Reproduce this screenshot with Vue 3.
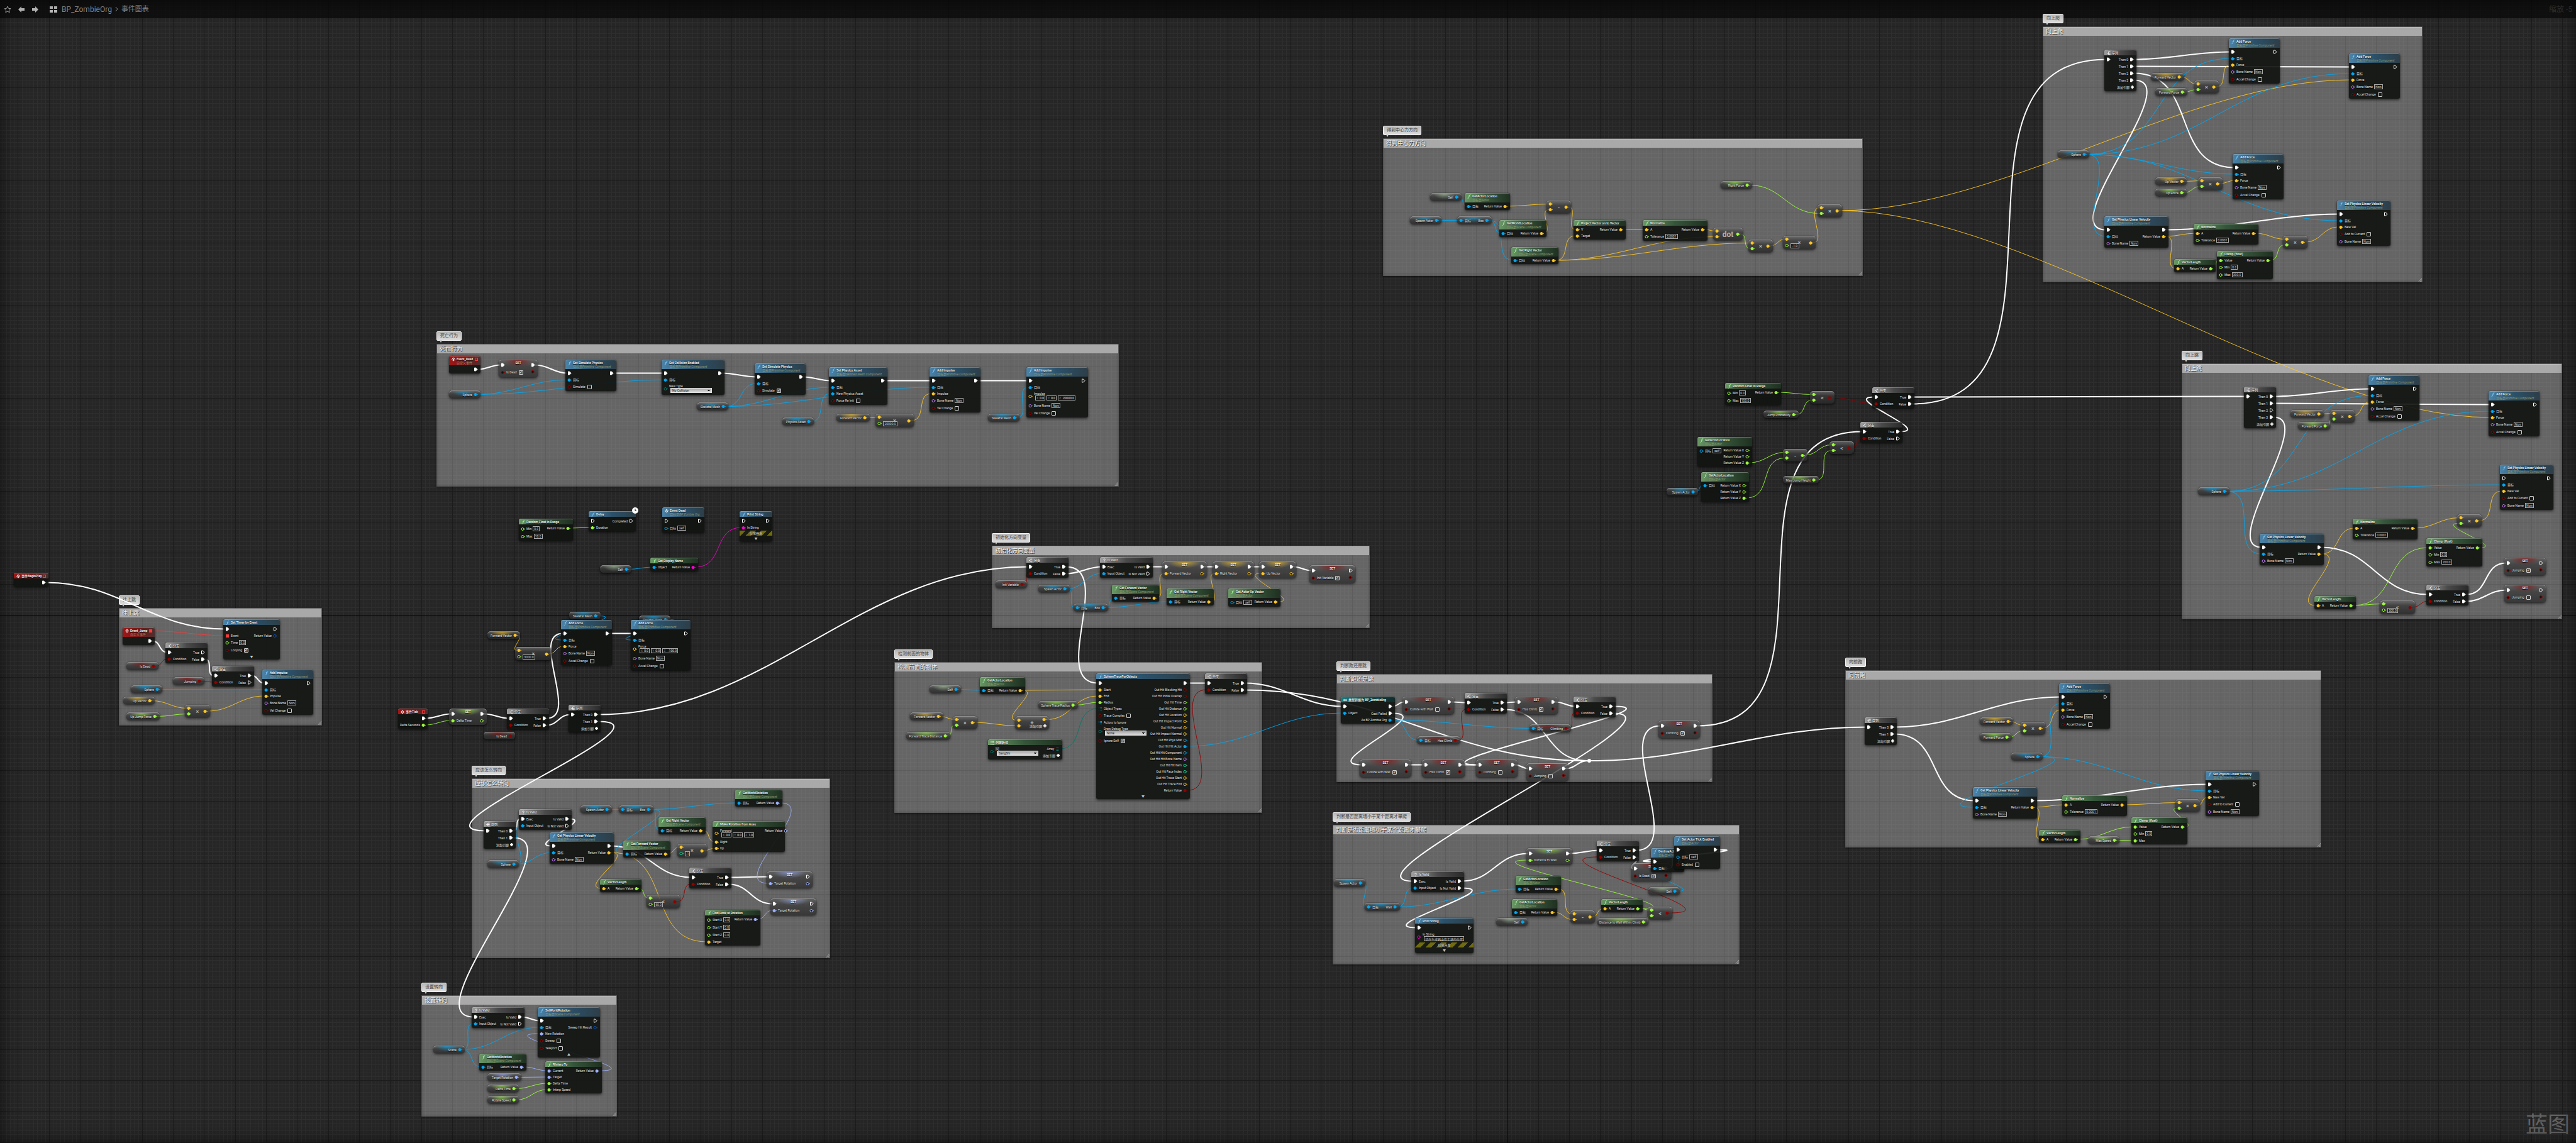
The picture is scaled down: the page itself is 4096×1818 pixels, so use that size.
<script setup>
import { computed, nextTick, onBeforeUnmount, onMounted, ref } from 'vue'

const ZOOM = 0.571
const MAJOR = 86.4
const ORIGIN = { x: 4197, y: 1713 }
const px = (v) => Math.round(v * ZOOM)

const colors = {
  exec: '#ffffff', obj: '#00a8f3', vec: '#ffc823', flt: '#9bff3c', bool: '#930000', name: '#b875e6',
  rot: '#9fb2ff', int: '#1fdf9f', str: '#ff00d4', struct: '#0b58c8', enum: '#067567', delegate: '#ff3838',
  objarr: '#00a8f3', enumarr: '#067567', self: '#a9c9a0',
}

/* pin = [kind, label, widget]; widgets: {t: text} {c: checked} {s: option} {v: [x, y, z]} */
const E = ['exec', '']
const target = ['obj', '目标']
const targetSelf = ['obj', '目标', { t: 'self' }]
const bone = ['name', 'Bone Name', { t: 'None' }]
const ret = (kind) => [kind, 'Return Value']
const off = { c: false }
const on = { c: true }

const node = (type, id, x, y, w, rest) => ({ type, id, x, y, w, ins: [], outs: [], ...rest })
const fn = (id, x, y, w, title, sub, ins, outs, extra = {}) =>
  node('box', id, x, y, w, { tone: 'blue', icon: 'f', title, sub, ins, outs, ...extra })
const pure = (id, x, y, w, title, sub, ins, outs, extra = {}) =>
  fn(id, x, y, w, title, sub, ins, outs, { tone: 'green', ...extra })
const event = (id, x, y, w, title, sub, outs = [E]) =>
  node('box', id, x, y, w, { tone: 'red', icon: 'diamond', title, sub, outs, delegate: true })
const branch = (id, x, y, w = 117) =>
  node('box', id, x, y, w, { tone: 'gray', icon: 'branch', title: '分支', ins: [E, ['bool', 'Condition']], outs: [['exec', 'True'], ['exec', 'False']] })
const seq = (id, x, y, n) =>
  node('box', id, x, y, 89, { tone: 'gray', icon: 'seq', title: '序列', ins: [E], outs: Array.from({ length: n }, (_, i) => ['exec', `Then ${i}`]), addPin: true })
const isValid = (id, x, y) =>
  node('box', id, x, y, 147, { tone: 'gray', icon: '?', title: 'Is Valid', ins: [['exec', 'Exec'], ['obj', 'Input Object']], outs: [['exec', 'Is Valid'], ['exec', 'Is Not Valid']] })
const get = (id, x, y, w, kind, label, ins = []) => node('pill', id, x, y, w, { glow: kind, ins, outs: [[kind, label]] })
const self = (id, x, y) => node('pill', id, x, y, 88, { glow: 'self', outs: [['obj', 'Self']] })
const set = (id, x, y, w, kind, label, widget) =>
  node('set', id, x, y, w, { glow: kind, title: 'SET', ins: [E, [kind, label, widget]], outs: [E, [kind, '']] })
const op = (id, x, y, w, glyph, a, b, out, widget, addPin = false) =>
  node('op', id, x, y, w, { glyph, ins: [[a, ''], [b, '', widget]], outs: [[out, '']], addPin })

const PRIM = '目标是Primitive Component'
const SCENE = '目标是Scene Component'
const ACTOR = '目标是Actor'
const addForce = (id, x, y, w = 141, v) =>
  fn(id, x, y, w, 'Add Force', PRIM, [E, target, ['vec', 'Force', v], bone, ['bool', 'Accel Change', off]], [E])
const addImpulse = (id, x, y, w = 142, v) =>
  fn(id, x, y, w, 'Add Impulse', PRIM, [E, target, ['vec', 'Impulse', v], bone, ['bool', 'Vel Change', off]], [E])
const getVelocity = (id, x, y) => fn(id, x, y, 178, 'Get Physics Linear Velocity', PRIM, [E, target, bone], [E, ret('vec')])
const setVelocity = (id, x, y) =>
  fn(id, x, y, 148, 'Set Physics Linear Velocity', PRIM, [E, target, ['vec', 'New Vel'], ['bool', 'Add to Current', off], bone], [E])
const normalize = (id, x, y) => pure(id, x, y, 181, 'Normalize', '', [['vec', 'A'], ['flt', 'Tolerance', { t: '0.0001' }]], [ret('vec')])
const vecLength = (id, x, y) => pure(id, x, y, 115, 'VectorLength', '', [['vec', 'A']], [ret('flt')])
const clamp = (id, x, y, max) =>
  pure(id, x, y, 155, 'Clamp (float)', '', [['flt', 'Value'], ['flt', 'Min', { t: '0.0' }], ['flt', 'Max', { t: max }]], [ret('flt')])
const randomRange = (id, x, y, w, max) =>
  pure(id, x, y, w, 'Random Float in Range', '', [['flt', 'Min', { t: '0.0' }], ['flt', 'Max', { t: max }]], [ret('flt')])
const xyz = [['flt', 'Return Value X'], ['flt', 'Return Value Y'], ['flt', 'Return Value Z']]

const comments = [
  { title: '往上跳', x: 331, y: 1693, w: 566, h: 328 },
  { title: '死亡行为', x: 1216, y: 958, w: 1901, h: 398 },
  { title: '应该怎么转向', x: 1314, y: 2168, w: 998, h: 501 },
  { title: '设置转向', x: 1173, y: 2773, w: 545, h: 338 },
  { title: '初始化方向变量', x: 2761, y: 1521, w: 1053, h: 230 },
  { title: '检测前面的物体', x: 2491, y: 1844, w: 1025, h: 421 },
  { title: '判断跑还是跳', x: 3722, y: 1877, w: 1047, h: 302 },
  { title: '判断是否距离墙小于某个距离才攀爬', x: 3711, y: 2297, w: 1133, h: 389 },
  { title: '得到中心力方向', x: 3852, y: 386, w: 1336, h: 384 },
  { title: '向上爬', x: 5688, y: 73, w: 1058, h: 712 },
  { title: '向上跳', x: 6076, y: 1013, w: 1059, h: 712 },
  { title: '向前跑', x: 5138, y: 1867, w: 1326, h: 494 },
]

const nodes = [
  /* hop timer */
  event('begin', 39, 1596, 97, '事件BeginPlay', ''),
  event('evJump', 342, 1747, 89, 'Event_Jump', '自定义事件'),
  fn('timer', 622, 1725, 158, 'Set Timer by Event', '', [E, ['delegate', 'Event'], ['flt', 'Time', { t: '0.5' }], ['bool', 'Looping', on]], [E, ret('struct')], { expand: '▼' }),
  branch('h1', 461, 1790),
  get('hDead', 352, 1844, 89, 'bool', 'Is Dead'),
  branch('h2', 590, 1855),
  get('hJumping', 482, 1887, 88, 'bool', 'Jumping'),
  get('hSphere', 364, 1909, 88, 'obj', 'Sphere'),
  addImpulse('hImp', 731, 1865),
  get('hUp', 343, 1941, 88, 'vec', 'Up Vector'),
  get('hForce', 352, 1984, 92, 'flt', 'Up Jump Force'),
  op('hMul', 515, 1963, 70, '×', 'vec', 'flt', 'vec'),

  /* death */
  event('evDead', 1250, 991, 87, 'Event_Dead', '自定义事件'),
  set('dSet', 1389, 1001, 109, 'bool', 'Is Dead', on),
  fn('dSim', 1574, 1001, 141, 'Set Simulate Physics', PRIM, [E, target, ['bool', 'Simulate', off]], [E]),
  fn('dCol', 1843, 1001, 176, 'Set Collision Enabled', PRIM, [E, target, ['enum', 'New Type', { s: 'No Collision' }]], [E]),
  fn('dSim2', 2102, 1012, 142, 'Set Simulate Physics', PRIM, [E, target, ['bool', 'Simulate', on]], [E]),
  get('dSphere', 1250, 1088, 87, 'obj', 'Sphere'),
  get('dMesh', 1940, 1120, 88, 'obj', 'Skeletal Mesh'),
  get('dAsset', 2179, 1163, 88, 'obj', 'Physics Asset'),
  fn('dPhys', 2308, 1023, 162, 'Set Physics Asset', '目标是Skinned Mesh Component', [E, target, ['obj', 'New Physics Asset'], ['bool', 'Force Re Init', off]], [E]),
  get('dFwd', 2329, 1153, 92, 'vec', 'Forward Vector'),
  op('dMul', 2438, 1153, 107, '×', 'vec', 'flt', 'vec', { t: '20000.0' }),
  addImpulse('dImp', 2589, 1023),
  get('dMesh2', 2751, 1153, 88, 'obj', 'Skeletal Mesh'),
  addImpulse('dImp2', 2859, 1023, 172, { v: ['0.0', '0.0', '20000.0'] }),

  /* tick */
  randomRange('rand', 1444, 1445, 150, '10.0'),
  fn('delay', 1639, 1424, 132, 'Delay', '', [E, ['flt', 'Duration']], [['exec', 'Completed']], { latent: true }),
  fn('callDead', 1844, 1413, 118, 'Event Dead', '目标是BP Zombie Org', [E, targetSelf], [E], { icon: 'diamond' }),
  fn('print', 2059, 1424, 91, 'Print String', '', [E, ['str', 'In String']], [E], { dev: true, expand: '▼' }),
  pure('display', 1811, 1553, 133, 'Get Display Name', '', [['obj', 'Object']], [ret('str')]),
  self('tSelf', 1671, 1575),
  get('tMesh', 1585, 1704, 87, 'obj', 'Skeletal Mesh'),
  get('tMesh2', 1779, 1714, 87, 'obj', 'Skeletal Mesh'),
  addForce('tAdd', 1562, 1726),
  addForce('tAdd2', 1756, 1726, 166, { v: ['0.0', '0.0', '-100.0'] }),
  get('tFwd', 1358, 1758, 91, 'vec', 'Forward Vector'),
  op('tMul', 1434, 1802, 101, '×', 'vec', 'flt', 'vec', { t: '3000.0' }),
  event('tick', 1109, 1974, 82, '事件Tick', '', [E, ['flt', 'Delta Seconds']]),
  set('tDelta', 1250, 1974, 105, 'flt', 'Delta Time'),
  branch('tBr', 1411, 1974),
  seq('tSeq', 1584, 1964, 2),
  get('tDead', 1346, 2039, 88, 'bool', 'Is Dead'),

  /* how to turn */
  seq('rSeq', 1346, 2287, 2),
  isValid('rValid', 1444, 2254),
  get('rSphere', 1357, 2395, 88, 'obj', 'Sphere'),
  getVelocity('rVel', 1531, 2319),
  get('rSpawn', 1617, 2244, 87, 'obj', 'Spawn Actor'),
  get('rBox', 1724, 2244, 97, 'obj', 'Box', [target]),
  pure('rRot', 2048, 2200, 131, 'GetWorldRotation', SCENE, [target], [ret('rot')]),
  pure('rRight', 1833, 2276, 131, 'Get Right Vector', SCENE, [target], [ret('vec')]),
  pure('rFwd', 1736, 2341, 131, 'Get Forward Vector', SCENE, [target], [ret('vec')]),
  op('rMul', 1887, 2351, 83, '×', 'vec', 'int', 'vec', { t: '-1' }),
  pure('rAxes', 1984, 2287, 202, 'Make Rotation from Axes', '', [['vec', 'Forward', { v: ['0.0', '0.0', '1.0'] }], ['vec', 'Right'], ['vec', 'Up']], [ret('rot')]),
  vecLength('rLen', 1670, 2449),
  op('rLess', 1801, 2492, 93, '<', 'flt', 'flt', 'bool', { t: '50.0' }),
  branch('rBr', 1919, 2416),
  set('rSet', 2134, 2427, 128, 'rot', 'Target Rotation'),
  set('rSet2', 2145, 2503, 128, 'rot', 'Target Rotation'),
  pure('rLook', 1963, 2535, 154, 'Find Look at Rotation', '', [['flt', 'Start X', { t: '0.0' }], ['flt', 'Start Y', { t: '0.0' }], ['flt', 'Start Z', { t: '0.0' }], ['vec', 'Target']], [ret('rot')]),

  /* apply rotation */
  isValid('aValid', 1314, 2805),
  fn('aSet', 1497, 2805, 173, 'SetWorldRotation', SCENE, [E, target, ['rot', 'New Rotation'], ['bool', 'Sweep', off], ['bool', 'Teleport', off]], [E, ['struct', 'Sweep Hit Result']], { expand: '▲' }),
  get('aScene', 1206, 2913, 88, 'obj', 'Scene'),
  pure('aGet', 1335, 2935, 132, 'GetWorldRotation', SCENE, [target], [ret('rot')]),
  get('aTarget', 1357, 2989, 95, 'rot', 'Target Rotation'),
  get('aDelta', 1357, 3021, 88, 'flt', 'Delta Time'),
  get('aSpeed', 1357, 3053, 88, 'flt', 'Rotate Speed'),
  pure('aInterp', 1519, 2956, 157, 'RInterp To', '', [['rot', 'Current'], ['rot', 'Target'], ['flt', 'Delta Time'], ['flt', 'Interp Speed']], [ret('rot')]),

  /* direction variables */
  branch('iBr', 2858, 1552),
  get('iVar', 2773, 1617, 87, 'bool', 'Init Variable'),
  isValid('iValid', 3063, 1552),
  get('iSpawn', 2891, 1628, 87, 'obj', 'Spawn Actor'),
  get('iBox', 2989, 1682, 97, 'obj', 'Box', [target]),
  pure('iFwd', 3096, 1628, 131, 'Get Forward Vector', SCENE, [target], [ret('vec')]),
  pure('iRight', 3248, 1639, 131, 'Get Right Vector', SCENE, [target], [ret('vec')]),
  pure('iUp', 3420, 1639, 146, 'Get Actor Up Vector', ACTOR, [targetSelf], [ret('vec')]),
  set('iSetF', 3237, 1564, 124, 'vec', 'Forward Vector'),
  set('iSetR', 3376, 1564, 115, 'vec', 'Right Vector'),
  set('iSetU', 3507, 1564, 103, 'vec', 'Up Vector'),
  set('iSetV', 3647, 1574, 127, 'bool', 'Init Variable', on),

  /* forward trace */
  self('sSelf', 2589, 1909),
  pure('sLoc', 2729, 1887, 126, 'GetActorLocation', ACTOR, [target], [ret('vec')]),
  get('sFwd', 2534, 1984, 92, 'vec', 'Forward Vector'),
  get('sDist', 2524, 2039, 122, 'flt', 'Forward Trace Distance'),
  op('sMul', 2653, 1995, 68, '×', 'vec', 'flt', 'vec'),
  op('sAdd', 2826, 1995, 94, '+', 'vec', 'vec', 'vec', undefined, true),
  get('sRadius', 2891, 1952, 110, 'flt', 'Sphere Trace Radius'),
  pure('sArray', 2751, 2060, 206, '创建数组', '', [['enum', '[0]', { s: 'SangShi' }]], [['enumarr', 'Array']], { icon: 'array', addPin: true }),
  fn('trace', 3053, 1876, 261, 'SphereTraceForObjects', '', [
    E, ['vec', 'Start'], ['vec', 'End'], ['flt', 'Radius'], ['enumarr', 'Object Types'], ['bool', 'Trace Complex', off],
    ['objarr', 'Actors to Ignore'], ['enum', 'Draw Debug Type', { s: 'None' }], ['bool', 'Ignore Self', on],
  ], [
    E, ['bool', 'Out Hit Blocking Hit'], ['bool', 'Out Hit Initial Overlap'], ['flt', 'Out Hit Time'], ['flt', 'Out Hit Distance'],
    ['vec', 'Out Hit Location'], ['vec', 'Out Hit Impact Point'], ['vec', 'Out Hit Normal'], ['vec', 'Out Hit Impact Normal'],
    ['obj', 'Out Hit Phys Mat'], ['obj', 'Out Hit Hit Actor'], ['obj', 'Out Hit Hit Component'], ['name', 'Out Hit Hit Bone Name'],
    ['int', 'Out Hit Hit Item'], ['int', 'Out Hit Face Index'], ['vec', 'Out Hit Trace Start'], ['vec', 'Out Hit Trace End'], ret('bool'),
  ], { expand: '▼' }),
  branch('sBr', 3355, 1876),

  /* run or jump */
  fn('cast', 3733, 1941, 151, '类型转换为 BP_ZombieOrg', '', [E, ['obj', 'Object']], [E, ['exec', 'Cast Failed'], ['obj', 'As BP Zombie Org']], { tone: 'teal', icon: 'cast' }),
  set('jWall', 3906, 1941, 143, 'bool', 'Collide with Wall', off),
  branch('jBr', 4078, 1930),
  set('jHas', 4219, 1941, 119, 'bool', 'Has Climb', on),
  branch('jBr2', 4381, 1941),
  get('jClimbing', 4260, 2018, 116, 'bool', 'Climbing', [target]),
  get('jHasGet', 3945, 2050, 120, 'bool', 'Has Climb', [target]),
  set('jWall2', 3787, 2115, 143, 'bool', 'Collide with Wall', on),
  set('jHas2', 3960, 2115, 119, 'bool', 'Has Climb', on),
  set('jClimb2', 4111, 2115, 116, 'bool', 'Climbing', off),
  set('jJump', 4251, 2126, 117, 'bool', 'Jumping', off),
  node('knot', 'knot', 4421, 2114, 10, { ins: [E], outs: [E] }),
  set('jClimb3', 4618, 2007, 115, 'bool', 'Climbing', on),

  /* wall distance */
  get('wSpawn', 3714, 2449, 88, 'obj', 'Spawn Actor'),
  get('wWall', 3801, 2515, 98, 'obj', 'Wall', [target]),
  isValid('wValid', 3930, 2428),
  fn('wPrint', 3941, 2557, 162, 'Print String', '', [E, ['str', 'In String', { t: '请在生成器中指定墙的位置', below: true }]], [E], { dev: true, expand: '▼' }),
  set('wDist', 4251, 2363, 127, 'flt', 'Distance to Wall'),
  pure('wLoc', 4221, 2439, 126, 'GetActorLocation', ACTOR, [target], [ret('vec')]),
  pure('wLoc2', 4211, 2504, 126, 'GetActorLocation', ACTOR, [target], [ret('vec')]),
  self('wSelf', 4167, 2557),
  op('wSub', 4373, 2536, 69, '-', 'vec', 'vec', 'vec'),
  vecLength('wLen', 4459, 2504),
  get('wWithin', 4449, 2557, 142, 'flt', 'Distance to Wall Within Climb'),
  op('wLess', 4589, 2525, 69, '<', 'flt', 'flt', 'bool'),
  branch('wBr', 4446, 2341),
  set('wDead', 4543, 2405, 110, 'bool', 'Is Dead', on),
  fn('wDestroy', 4597, 2363, 93, 'DestroyActor', ACTOR, [E, target], [E]),
  fn('wTick', 4662, 2330, 128, 'Set Actor Tick Enabled', ACTOR, [E, targetSelf, ['bool', 'Enabled', off]], [E]),
  self('wSelf2', 4590, 2471),

  /* centering force */
  self('cSelf', 3982, 537),
  pure('cLoc', 4078, 537, 126, 'GetActorLocation', ACTOR, [target], [ret('vec')]),
  get('cSpawn', 3927, 602, 88, 'obj', 'Spawn Actor'),
  get('cBox', 4058, 602, 97, 'obj', 'Box', [target]),
  pure('cWorld', 4176, 613, 132, 'GetWorldLocation', SCENE, [target], [ret('vec')]),
  pure('cRight', 4208, 688, 132, 'Get Right Vector', SCENE, [target], [ret('vec')]),
  op('cSub', 4306, 559, 69, '-', 'vec', 'vec', 'vec'),
  pure('cProj', 4381, 613, 146, 'Project Vector on to Vector', '', [['vec', 'V'], ['vec', 'Target']], [ret('vec')]),
  normalize('cNorm', 4575, 613),
  op('cDot', 4770, 634, 82, 'dot', 'vec', 'vec', 'flt'),
  op('cMul', 4868, 667, 69, '×', 'vec', 'flt', 'vec'),
  op('cNeg', 4965, 656, 91, '×', 'vec', 'flt', 'vec', { t: '-1.0' }),
  op('cOut', 5061, 569, 69, '×', 'vec', 'flt', 'vec'),
  get('cForce', 4791, 505, 88, 'flt', 'Right Force'),

  /* jump chance */
  randomRange('pRand', 4803, 1067, 155, '100.0'),
  op('pLess', 5040, 1089, 68, '<', 'flt', 'flt', 'bool'),
  get('pProb', 4911, 1143, 98, 'flt', 'Jump Probability'),
  branch('pBr', 5213, 1078),
  branch('pBr2', 5181, 1175),
  pure('pLoc', 4727, 1218, 153, 'GetActorLocation', ACTOR, [targetSelf], xyz),
  pure('pLoc2', 4738, 1316, 133, 'GetActorLocation', ACTOR, [target], xyz),
  get('pSpawn', 4641, 1359, 87, 'obj', 'Spawn Actor'),
  op('pSub', 4965, 1251, 68, '-', 'flt', 'flt', 'flt'),
  op('pLess2', 5095, 1229, 69, '<', 'flt', 'flt', 'bool'),
  get('pMax', 4965, 1326, 100, 'flt', 'Max Jump Height'),

  /* climb */
  seq('uSeq', 5860, 138, 4),
  addForce('uAdd', 6206, 106),
  addForce('uAdd2', 6541, 148),
  get('uFwd', 5990, 203, 92, 'vec', 'Forward Vector'),
  get('uForce', 6001, 246, 90, 'flt', 'Forward Force'),
  op('uMul', 6110, 224, 68, '×', 'vec', 'flt', 'vec'),
  get('uSphere', 5731, 419, 88, 'obj', 'Sphere'),
  addForce('uAdd3', 6217, 429),
  get('uUp', 6001, 494, 88, 'vec', 'Up Vector'),
  get('uUpF', 6001, 526, 88, 'flt', 'Up Force'),
  op('uMul2', 6120, 494, 69, '×', 'vec', 'flt', 'vec'),
  getVelocity('uVel', 5860, 602),
  normalize('uNorm', 6109, 623),
  vecLength('uLen', 6055, 722),
  clamp('uClamp', 6174, 699, '300.0'),
  op('uMul3', 6358, 657, 69, '×', 'vec', 'flt', 'vec'),
  setVelocity('uSetV', 6508, 559),

  /* jump */
  seq('vSeq', 6249, 1077, 4),
  addForce('vAdd', 6595, 1046),
  addForce('vAdd2', 6930, 1089),
  get('vFwd', 6379, 1142, 92, 'vec', 'Forward Vector'),
  get('vForce', 6400, 1175, 90, 'flt', 'Forward Force'),
  op('vMul', 6488, 1142, 69, '×', 'vec', 'flt', 'vec'),
  get('vSphere', 6120, 1358, 88, 'obj', 'Sphere'),
  setVelocity('vSetV', 6962, 1294),
  getVelocity('vVel', 6292, 1487),
  normalize('vNorm', 6552, 1445),
  vecLength('vLen', 6444, 1660),
  clamp('vClamp', 6757, 1499, '200.0'),
  op('vMul2', 6843, 1433, 69, '×', 'vec', 'flt', 'vec'),
  branch('vBr', 6757, 1629),
  op('vLess', 6627, 1672, 98, '<', 'flt', 'flt', 'bool', { t: '500.0' }),
  set('vSet', 6973, 1553, 116, 'bool', 'Jumping', on),
  set('vSet2', 6973, 1629, 116, 'bool', 'Jumping', off),

  /* run */
  seq('fSeq', 5192, 1998, 2),
  addForce('fAdd', 5734, 1904),
  get('fFwd', 5513, 1999, 92, 'vec', 'Forward Vector'),
  get('fForce', 5513, 2042, 90, 'flt', 'Forward Force'),
  op('fMul', 5627, 2010, 68, '×', 'vec', 'flt', 'vec'),
  get('fSphere', 5600, 2096, 88, 'obj', 'Sphere'),
  getVelocity('fVel', 5494, 2193),
  normalize('fNorm', 5742, 2215),
  vecLength('fLen', 5677, 2311),
  clamp('fClamp', 5936, 2276, '300.0'),
  op('fMul2', 6058, 2226, 69, '×', 'vec', 'flt', 'vec'),
  get('fMax', 5815, 2330, 88, 'flt', 'Max Speed'),
  setVelocity('fSetV', 6141, 2147),
]

const wires = `
begin.0>timer.0 evJump.d>timer.1 evJump.0>h1.0 hDead.0>h1.1 h1.1>h2.0 hJumping.0>h2.1 h2.0>hImp.0 hSphere.0>hImp.1 hUp.0>hMul.0 hForce.0>hMul.1 hMul.0>hImp.2
evDead.0>dSet.0 dSet.0>dSim.0 dSim.0>dCol.0 dCol.0>dSim2.0 dSim2.0>dPhys.0 dPhys.0>dImp.0 dImp.0>dImp2.0 dSphere.0>dSim.1 dSphere.0>dCol.1
dMesh.0>dSim2.1 dMesh.0>dPhys.1 dMesh.0>dImp.1 dAsset.0>dPhys.2 dFwd.0>dMul.0 dMul.0>dImp.2 dMesh2.0>dImp2.1
rand.0>delay.1 tSelf.0>display.0 display.0>print.1 tMesh.0>tAdd.1 tMesh2.0>tAdd2.1 tAdd.0>tAdd2.0 tFwd.0>tMul.0 tMul.0>tAdd.2
tick.0>tDelta.0 tick.1>tDelta.1 tDelta.0>tBr.0 tDead.0>tBr.1 tBr.0>tAdd.0 tBr.1>tSeq.0 tSeq.0>iBr.0 tSeq.1>rSeq.0
rSeq.0>rValid.0 rSeq.1>aValid.0 rSphere.0>rValid.1 rSphere.0>rVel.1 rValid.0>rVel.0 rVel.0>rBr.0 rSpawn.0>rBox.0 rBox.0>rRot.0 rBox.0>rRight.0 rBox.0>rFwd.0
rRight.0>rAxes.1 rFwd.0>rMul.0 rMul.0>rAxes.2 rVel.1>rLen.0 rVel.1>rLook.3 rLen.0>rLess.0 rLess.0>rBr.1 rBr.0>rSet.0 rBr.1>rSet2.0 rRot.0>rSet.1 rLook.0>rSet2.1
aValid.0>aSet.0 aScene.0>aValid.1 aScene.0>aSet.1 aScene.0>aGet.0 aGet.0>aInterp.0 aTarget.0>aInterp.1 aDelta.0>aInterp.2 aSpeed.0>aInterp.3 aInterp.0>aSet.2
iVar.0>iBr.1 iBr.0>trace.0 iBr.1>iValid.0 iSpawn.0>iValid.1 iSpawn.0>iBox.0 iBox.0>iFwd.0 iBox.0>iRight.0 iValid.0>iSetF.0 iSetF.0>iSetR.0 iSetR.0>iSetU.0 iSetU.0>iSetV.0
iFwd.0>iSetF.1 iRight.0>iSetR.1 iUp.0>iSetU.1
sSelf.0>sLoc.0 sLoc.0>trace.1 sLoc.0>sAdd.0 sFwd.0>sMul.0 sDist.0>sMul.1 sMul.0>sAdd.1 sAdd.0>trace.2 sRadius.0>trace.3 sArray.0>trace.4 trace.0>sBr.0 trace.17>sBr.1
sBr.0>cast.0 sBr.1>knot.0 trace.10>cast.1 cast.0>jWall.0 cast.1>jWall2.0 cast.2>jHasGet.0 cast.2>jClimbing.0 jWall.0>jBr.0 jHasGet.0>jBr.1 jBr.0>jHas.0 jBr.1>knot.0
jHas.0>jBr2.0 jClimbing.0>jBr2.1 jBr2.0>jClimb2.0 jBr2.1>wValid.0 jWall2.0>jHas2.0 jHas2.0>jClimb2.0 jClimb2.0>jJump.0 jJump.0>knot.0 knot.0>fSeq.0 jClimb3.0>pBr2.0
wSpawn.0>wWall.0 wWall.0>wValid.1 wWall.0>wLoc.0 wValid.0>wDist.0 wValid.1>wPrint.0 wDist.0>wBr.0 wBr.0>jClimb3.0 wBr.1>wDead.0 wDead.0>wTick.0 wTick.0>wDestroy.0 wSelf2.0>wDestroy.1
wLoc.0>wSub.0 wLoc2.0>wSub.1 wSelf.0>wLoc2.0 wSub.0>wLen.0 wLen.0>wLess.0 wLen.0>wDist.1 wWithin.0>wLess.1 wLess.0>wBr.1
cSelf.0>cLoc.0 cSpawn.0>cBox.0 cBox.0>cWorld.0 cBox.0>cRight.0 cLoc.0>cSub.0 cWorld.0>cSub.1 cSub.0>cProj.0 cRight.0>cProj.1 cProj.0>cNorm.0 cNorm.0>cDot.0 cRight.0>cDot.1
cRight.0>cMul.0 cDot.0>cMul.1 cMul.0>cNeg.0 cNeg.0>cOut.0 cForce.0>cOut.1 cOut.0>uAdd2.2 cOut.0>vAdd2.2
pRand.0>pLess.0 pProb.0>pLess.1 pLess.0>pBr.1 pBr2.0>pBr.0 pLoc.2>pSub.0 pLoc2.2>pSub.1 pSpawn.0>pLoc2.0 pSub.0>pLess2.0 pMax.0>pLess2.1 pLess2.0>pBr2.1 pBr.0>vSeq.0 pBr.1>uSeq.0
uSeq.0>uAdd.0 uSeq.1>uAdd2.0 uSeq.2>uAdd3.0 uSeq.3>uVel.0 uSphere.0>uAdd.1 uSphere.0>uAdd2.1 uSphere.0>uAdd3.1 uSphere.0>uSetV.1 uSphere.0>uVel.1
uFwd.0>uMul.0 uForce.0>uMul.1 uMul.0>uAdd.2 uUp.0>uMul2.0 uUpF.0>uMul2.1 uMul2.0>uAdd3.2 uVel.0>uSetV.0 uVel.1>uNorm.0 uVel.1>uLen.0 uNorm.0>uMul3.0 uLen.0>uClamp.0 uClamp.0>uMul3.1 uMul3.0>uSetV.2
vSeq.0>vAdd.0 vSeq.1>vAdd2.0 vSeq.3>vVel.0 vSphere.0>vAdd.1 vSphere.0>vAdd2.1 vSphere.0>vSetV.1 vSphere.0>vVel.1 vFwd.0>vMul.0 vForce.0>vMul.1 vMul.0>vAdd.2
vVel.0>vBr.0 vVel.1>vNorm.0 vVel.1>vLen.0 vNorm.0>vMul2.0 vLen.0>vClamp.0 vLen.0>vLess.0 vClamp.0>vMul2.1 vMul2.0>vSetV.2 vLess.0>vBr.1 vBr.0>vSet.0 vBr.1>vSet2.0
fSeq.0>fAdd.0 fSeq.1>fVel.0 fFwd.0>fMul.0 fForce.0>fMul.1 fMul.0>fAdd.2 fSphere.0>fAdd.1 fSphere.0>fSetV.1 fSphere.0>fVel.1 fVel.0>fSetV.0 fVel.1>fNorm.0 fVel.1>fLen.0
fNorm.0>fMul2.0 fLen.0>fClamp.0 fMax.0>fClamp.2 fClamp.0>fMul2.1 fMul2.0>fSetV.2
`.trim().split(/\s+/).map((w) => {
  const [a, b] = w.split('>').map((s) => s.split('.'))
  return { from: `${a[0]}.o${a[1]}`, to: `${b[0]}.i${b[1]}` }
})

const linked = new Set(wires.flatMap((w) => [w.from, w.to]))
const isLinked = (n, side, i) => linked.has(`${n.id}.${side}${i}`)

const textWidth = (t) => (/[\u4e00-\u9fff]/.test(t) ? t.length * 5 + 4 : t.length * 3 + 2)
const showWidget = (n, i, pin) => pin[2] && !isLinked(n, 'i', i)
const stacked = (w) => Boolean(w.v || w.s || w.below)

const board = ref(null)
const size = ref({ w: 0, h: 0 })
const paths = ref([])

const spline = (x1, y1, x2, y2) => {
  const dx = x2 - x1
  const dy = Math.abs(y2 - y1)
  const cap = px(dx >= 0 ? 1000 : 200)
  const t = dx >= 0 ? Math.min(dx, cap) + Math.min(dy, cap) : Math.min(-dx, cap) * 2 + Math.min(dy, cap) * 1.5
  return `M${x1} ${y1}C${x1 + t / 3} ${y1} ${x2 - t / 3} ${y2} ${x2} ${y2}`
}

const route = () => {
  const base = board.value.getBoundingClientRect()
  size.value = { w: base.width, h: base.height }
  const at = {}
  board.value.querySelectorAll('[data-pin]').forEach((el) => {
    const r = el.getBoundingClientRect()
    at[el.dataset.pin] = { left: r.left - base.left, right: r.right - base.left, y: r.top - base.top + r.height / 2, kind: el.dataset.kind }
  })
  paths.value = wires.filter((w) => at[w.from] && at[w.to]).map((w) => ({
    d: spline(at[w.from].right, at[w.from].y, at[w.to].left, at[w.to].y),
    kind: at[w.from].kind,
  }))
}

const gridLines = (step, origin, limit, skipMajor) => {
  const out = []
  const first = Math.ceil(-origin / step)
  for (let i = first; i * step + origin < limit; i++) {
    if (!(skipMajor && i % 8 === 0)) out.push(Math.round(i * step + origin) + 0.5)
  }
  return out
}
const gridPath = (step, skip) => computed(() => {
  const { w, h } = size.value
  return gridLines(step, ORIGIN.x * ZOOM, w, skip).map((x) => `M${x} 0V${h}`).join('') +
    gridLines(step, ORIGIN.y * ZOOM, h, skip).map((y) => `M0 ${y}H${w}`).join('')
})
const minor = gridPath((MAJOR / 8) * ZOOM, true)
const major = gridPath(MAJOR * ZOOM, false)
const axes = computed(() => `M${px(ORIGIN.x) + 0.5} 0V${size.value.h}M0 ${px(ORIGIN.y) + 0.5}H${size.value.w}`)

onMounted(async () => {
  await nextTick()
  route()
  window.addEventListener('resize', route)
  document.fonts?.ready.then(route)
})
onBeforeUnmount(() => window.removeEventListener('resize', route))
</script>

<template>
  <main ref="board" class="board">
    <svg class="layer" :width="size.w" :height="size.h" aria-hidden="true">
      <path class="grid-minor" :d="minor" />
      <path class="grid-major" :d="major" />
      <path class="grid-axis" :d="axes" />
    </svg>

    <section v-for="c in comments" :key="c.title" class="comment" :style="{ left: px(c.x) + 'px', top: px(c.y) + 'px', width: px(c.w) + 'px', height: px(c.h) + 'px' }">
      <span class="bubble">{{ c.title }}</span>
      <h2>{{ c.title }}</h2>
      <svg class="grip" viewBox="0 0 8 8" aria-hidden="true"><path d="M1 8L8 0M4 8L8 3M6 8L8 6" /></svg>
    </section>

    <svg class="layer wires" :width="size.w" :height="size.h" aria-hidden="true">
      <path v-for="(p, i) in paths" :key="i" class="wire" :class="{ thick: p.kind === 'exec' }" :stroke="colors[p.kind]" :d="p.d" />
    </svg>

    <article v-for="n in nodes" :key="n.id" class="node" :class="[n.type, n.tone]" :style="{ left: px(n.x) + 'px', top: px(n.y) + 'px', width: px(n.w) + 'px', '--glow': colors[n.glow] }">
      <header v-if="n.type === 'box'" :class="{ two: n.sub }">
        <svg class="icon" viewBox="0 0 6 7" aria-hidden="true">
          <path v-if="n.icon === 'f'" class="func" d="M5.3 .8C4 .2 3.5 1 3.2 2.4L2.4 5.4C2.1 6.5 1.5 6.8 .6 6.3M1.8 2.8H4.4" />
          <path v-else-if="n.icon === 'diamond'" class="line" d="M3 .8L5.5 3.5L3 6.2L.5 3.5ZM3 2.3V4.7M2 3.5H4" />
          <path v-else-if="n.icon === 'branch'" class="line" d="M5.2 1.2H3.6L1.6 3.5L3.6 5.8H5.2M.2 3.5H1.6" />
          <path v-else-if="n.icon === 'seq'" class="line" d="M5.6 1.2H2.6V5.8H5.6M.2 3.5H5.6" />
          <path v-else-if="n.icon === 'array'" class="line" d="M.3 1.2H1.6M.3 3.5H1.6M.3 5.8H1.6M2.8 1.2H5.6M2.8 3.5H5.6M2.8 5.8H5.6" />
          <path v-else-if="n.icon === 'cast'" class="solid" d="M0 2.6H1.2V1.6L3 3.5L1.2 5.4V4.4H0ZM3 2.6H4.2V1.6L6 3.5L4.2 5.4V4.4H3Z" />
          <path v-else class="line" d="M1.5 2.2C1.6 .6 4.5 .6 4.4 2.2C4.3 3.2 3 3.2 3 4.6M3 5.6V6.5" />
        </svg>
        <div class="names">
          <h3>{{ n.title }}</h3>
          <p v-if="n.sub">{{ n.sub.slice(0, n.sub.startsWith('目标是') ? 3 : 9) }}<i v-if="n.sub.startsWith('目标是')">{{ n.sub.slice(3) }}</i></p>
        </div>
        <svg v-if="n.delegate" class="pin" viewBox="0 0 7 7" :data-pin="n.id + '.od'" data-kind="delegate" aria-hidden="true">
          <rect x="1.5" y="1.5" width="4" height="4" :stroke="colors.delegate" :fill="isLinked(n, 'o', 'd') ? colors.delegate : 'none'" />
        </svg>
      </header>
      <h3 v-else-if="n.type === 'set'" class="set-title">{{ n.title }}</h3>
      <b v-else-if="n.type === 'op'" class="glyph" :class="{ word: n.glyph === 'dot' }">{{ n.glyph }}</b>

      <div class="pins">
        <div v-for="side in ['i', 'o']" :key="side" class="col" :class="side">
          <div v-for="(p, i) in side === 'i' ? n.ins : n.outs" :key="i" class="row" :class="[p[0], { widget: side === 'i' && showWidget(n, i, p), tall: side === 'i' && showWidget(n, i, p) && stacked(p[2]) }]">
            <svg class="pin" viewBox="0 0 7 7" :data-pin="n.id + '.' + side + i" :data-kind="p[0]" aria-hidden="true">
              <path v-if="p[0] === 'exec'" d="M1.5 1H3.5L6 3.5L3.5 6H1.5Z" stroke="#fff" :fill="isLinked(n, side, i) ? '#fff' : 'none'" />
              <path v-else-if="p[0].endsWith('arr')" :stroke="colors[p[0]]" stroke-dasharray="1 1" d="M1 1.5H6M1 3.5H6M1 5.5H6" />
              <rect v-else-if="p[0] === 'delegate'" x="1" y="1" width="5" height="5" :fill="colors.delegate" />
              <g v-else :stroke="colors[p[0]]" :fill="isLinked(n, side, i) ? colors[p[0]] : '#10130f'">
                <circle cx="3" cy="3.5" r="2" /><path :fill="colors[p[0]]" stroke="none" d="M5.5 2.2L7 3.5L5.5 4.8Z" />
              </g>
            </svg>
            <component :is="side === 'i' && showWidget(n, i, p) && !p[2].v ? 'label' : 'span'" v-if="p[1]" class="label" :for="side === 'i' && showWidget(n, i, p) && !p[2].v ? n.id + '-' + i : null">{{ p[1] }}</component>
            <template v-if="side === 'i' && showWidget(n, i, p)">
              <input v-if="p[2].t" :id="n.id + '-' + i" class="field" type="text" :value="p[2].t" :aria-label="p[1] || 'Value'" :style="{ width: textWidth(p[2].t) + 'px' }">
              <input v-else-if="'c' in p[2]" :id="n.id + '-' + i" class="check" type="checkbox" :checked="p[2].c">
              <select v-else-if="p[2].s" :id="n.id + '-' + i" class="combo"><option>{{ p[2].s }}</option></select>
              <span v-else class="vector">
                <label v-for="(v, k) in p[2].v" :key="k">{{ 'XYZ'[k] }}<input type="text" :value="v" :style="{ width: textWidth(v) - 1 + 'px' }"></label>
              </span>
            </template>
          </div>
          <button v-if="side === 'o' && n.addPin" type="button" class="add">添加引脚<svg viewBox="0 0 5 5" aria-hidden="true"><path d="M2.5 0V5M0 2.5H5" /></svg></button>
        </div>
      </div>
      <div v-if="n.dev" class="dev">仅限开发</div>
      <button v-if="n.expand" type="button" class="expand">{{ n.expand }}</button>
      <svg v-if="n.latent" class="clock" viewBox="0 0 10 10" aria-hidden="true"><circle cx="5" cy="5" r="5" /><path d="M5 2V5.5H7" /></svg>
    </article>

    <nav class="bar" aria-label="图表导航">
      <button type="button" aria-label="收藏"><svg viewBox="0 0 12 12"><path class="stroke" d="M6 1L7.5 4.3L11 4.7L8.4 7.1L9.1 10.8L6 9L2.9 10.8L3.6 7.1L1 4.7L4.5 4.3Z" /></svg></button>
      <button type="button" aria-label="后退"><svg viewBox="0 0 12 12"><path d="M1 6L6 1V4H11V8H6V11Z" /></svg></button>
      <button type="button" aria-label="前进"><svg viewBox="0 0 12 12"><path d="M11 6L6 1V4H1V8H6V11Z" /></svg></button>
      <svg class="graph" viewBox="0 0 14 12" aria-hidden="true"><path d="M1 1H6V5H1ZM8 1H13V5H8ZM1 7H6V11H1ZM8 7H13V11H8Z" /></svg>
      <a href="#">BP_ZombieOrg</a>
      <svg class="sep" viewBox="0 0 6 10" aria-hidden="true"><path class="stroke" d="M1 1L5 5L1 9" /></svg>
      <a href="#">事件图表</a>
      <span class="zoom">缩放 -5</span>
    </nav>
    <p class="mark">蓝图</p>
  </main>
</template>

<style>
body { margin: 0; background: #262626; }
</style>

<style scoped>
.board { position: relative; min-height: 100vh; overflow: hidden; background: #262626; color: #e4e4e4; font: 5px/6px Roboto, "Noto Sans CJK SC", sans-serif; }
.board::after { content: ""; position: absolute; inset: 0; pointer-events: none; box-shadow: inset 0 0 30px rgba(0, 0, 0, .6); }
.board * { box-sizing: border-box; }
h2, h3, p { margin: 0; }
button { border: 0; padding: 0; background: none; color: inherit; font: inherit; }
.layer { position: absolute; left: 0; top: 0; pointer-events: none; fill: none; }
.wires { z-index: 2; }
.grid-minor { stroke: #2e2e2e; }
.grid-major { stroke: #1c1c1c; }
.grid-axis { stroke: #060606; }
.wire { stroke-width: 1; opacity: .9; }
.wire.thick { stroke-width: 2; opacity: 1; }

.comment { position: absolute; display: flow-root; background: rgba(255, 255, 255, .29); box-shadow: inset 0 0 5px rgba(0, 0, 0, .3), 0 1px 3px rgba(0, 0, 0, .6); }
.comment h2 { height: 14px; margin: 1px 1px 0; padding-left: 4px; border-top: 1px solid #bbb; background: #a9a9a9; color: #f2f2f2; font-size: 9px; line-height: 12px; font-weight: 400; text-shadow: 1px 1px 0 #333; }
.bubble { position: absolute; z-index: 1; left: 0; bottom: calc(100% + 5px); height: 15px; padding: 0 5px; border: 1px solid #f4f4f4; border-radius: 2px; background: linear-gradient(#b8b8b8, #dcdcdc); color: #3c3c3c; font-size: 7px; line-height: 13px; white-space: nowrap; }
.bubble::after { content: ""; position: absolute; left: 4px; top: 100%; border: 2px solid transparent; border-top: 4px solid #ccc; }
.grip { position: absolute; right: 1px; bottom: 1px; width: 6px; height: 6px; stroke: #b5b5b5; fill: none; }

.node { position: absolute; z-index: 3; border-radius: 3px; background: rgba(16, 19, 16, .92); box-shadow: 0 0 1px #000, 0 2px 4px rgba(0, 0, 0, .6); }
.box { padding-bottom: 1px; }
header { display: flex; gap: 2px; height: 9px; padding: 1px 3px 0 4px; border-radius: 3px 3px 0 0; border-top: 1px solid rgba(255, 255, 255, .3); background: linear-gradient(90deg, var(--lit), var(--mid) 50%, var(--dim)); }
header.two { height: 15px; }
.names { flex: 1; min-width: 0; }
.node h3 { font-size: 5px; line-height: 6px; font-weight: 700; color: #f0f0f0; white-space: nowrap; text-shadow: 0 1px 1px #000; }
.gray h3 { font-weight: 500; }
header p { color: #8f986e; white-space: nowrap; }
.icon { flex: none; width: 6px; height: 7px; fill: none; stroke: #eee; }
.icon .solid { fill: #eee; stroke: none; }
.blue { --lit: #4c83a8; --mid: #2b516a; --dim: #2d3e48; }
.green { --lit: #6b9866; --mid: #35553a; --dim: #1f3020; }
.gray { --lit: #a0a0a0; --mid: #4a4a4a; --dim: #2a2a2a; }
.red { --lit: #a01616; --mid: #7b1717; --dim: #4c3030; }
.teal { --lit: #147f80; --mid: #0b4c4d; --dim: #122b2b; }
.blue .func { stroke: #7cc8ff; }
.green .func { stroke: #9cf59c; }

.pins { display: flex; justify-content: space-between; padding: 1px 0 0; }
.col { display: flex; flex-direction: column; align-items: flex-start; }
.col.i { padding-left: 3px; }
.col.o { padding-right: 4px; align-items: flex-end; }
.row { position: relative; display: flex; align-items: center; gap: 2px; height: 10px; white-space: nowrap; }
.col.o .row { flex-direction: row-reverse; }
.row.exec { height: 11px; }
.row.widget { height: 12px; }
.row.widget.tall { height: 18px; flex-wrap: wrap; align-content: center; padding-left: 9px; width: 80px; gap: 0 2px; }
.tall .pin { position: absolute; left: 0; top: 6px; }
.tall .label { width: 60px; }
.pin { flex: none; display: block; width: 7px; height: 7px; fill: none; overflow: visible; }
.label { text-shadow: 0 1px 1px #000; }
.field { height: 8px; padding: 0 1px; border: 1px solid #a8a8a8; background: rgba(20, 20, 20, .6); color: #d0d0d0; font: 5px/6px Roboto, "Noto Sans CJK SC", sans-serif; text-align: center; }
.tall .field, .vector { margin-left: 2px; }
.check { appearance: none; display: grid; place-items: center; width: 7px; height: 7px; margin: 0 1px; border: 1px solid #cfcfcf; border-radius: 1px; color: #fff; font-size: 6px; line-height: 5px; }
.check:checked { background: #555; }
.check:checked::before { content: "✓"; }
.combo { appearance: none; width: 66px; height: 8px; margin-left: 2px; padding: 0 2px; border: 1px solid #e0e0e0; border-radius: 0; background: linear-gradient(45deg, transparent 50%, #111 50%) right 4px center / 2px 3px no-repeat, linear-gradient(-45deg, transparent 50%, #111 50%) right 2px center / 2px 3px no-repeat, linear-gradient(#a8a8a8, #dcdcdc); color: #111; font: 5px/6px Roboto, sans-serif; }
.vector { display: flex; gap: 2px; }
.vector label { display: flex; align-items: center; height: 8px; padding-left: 1px; border: 1px solid #a8a8a8; color: #777; }
.vector input { height: 6px; padding: 0 1px; border: 0; background: none; color: #e4e4e4; font: 5px/6px Roboto, sans-serif; text-align: right; }
.add { display: flex; align-items: center; gap: 2px; height: 11px; }
.add svg { width: 5px; height: 5px; stroke: #fff; stroke-width: 2; }
.dev { height: 8px; text-align: center; line-height: 8px; text-shadow: 0 0 1px #000; background: repeating-linear-gradient(-45deg, #6f6b0e 0 6px, #1a1c14 6px 12px); }
.expand { display: block; width: 100%; height: 8px; text-align: center; color: #c8c8c8; line-height: 8px; }
.clock { position: absolute; right: -4px; top: -6px; width: 10px; height: 10px; fill: #fff; stroke: #222; }
.clock circle { stroke: none; }

.pill, .set, .op { --tint: color-mix(in srgb, var(--glow, transparent) 60%, transparent); border-radius: 5px; border-top: 1px solid rgba(255, 255, 255, .45); background: radial-gradient(ellipse 35% 80% at 45% 0, var(--tint), transparent), linear-gradient(rgba(105, 105, 105, .8), rgba(58, 58, 58, .8) 35%, rgba(40, 40, 40, .85)); }
.set { background: radial-gradient(ellipse 35% 40% at 50% 0, var(--tint), transparent), linear-gradient(rgba(95, 95, 95, .8), rgba(62, 62, 62, .8) 35%, rgba(48, 48, 48, .85)); }
.pill { height: 12px; }
.pill .pins { padding: 0; }
.pill .row { height: 11px; }
.pill .col:only-child { margin-left: auto; }
.set { padding: 2px 0; }
.set-title { position: absolute; left: 0; right: 0; top: 1px; text-align: center; }
.set .pins { padding: 0; }
.op { min-height: 20px; }
.op .pins { padding: 0; align-items: center; }
.op .row { height: 9px; }
.op .row.widget { height: 11px; }
.glyph { position: absolute; inset: 0; display: flex; align-items: center; justify-content: center; color: #b0b0b0; font-size: 9px; }
.glyph.word { font-size: 12px; }
.knot { background: none; box-shadow: none; }
.knot .pins { position: relative; width: 6px; height: 6px; padding: 0; border-radius: 50%; background: #fff; }
.knot .col { padding: 0; width: 1px; }
.knot .row { height: 6px; width: 1px; }
.knot .pin { width: 1px; }

.bar { position: absolute; left: 0; right: 0; top: 0; display: flex; align-items: center; gap: 10px; height: 29px; padding: 0 6px; background: rgba(10, 10, 10, .75); color: #8f8f8f; font-size: 12px; line-height: 16px; }
.bar a { color: inherit; text-decoration: none; }
.bar a:last-of-type { font-size: 11px; }
.bar svg { display: block; width: 12px; height: 12px; fill: #c4c4c4; }
.bar .stroke { fill: none; stroke: #c4c4c4; stroke-width: 1; }
.bar .graph { width: 14px; margin: 0 -4px 0 6px; }
.bar .sep { width: 5px; height: 9px; margin: 0 -5px; }
.zoom { margin-left: auto; color: #333; }
.mark { position: absolute; right: 10px; bottom: 6px; color: #636363; font-size: 35px; line-height: 44px; }
</style>
